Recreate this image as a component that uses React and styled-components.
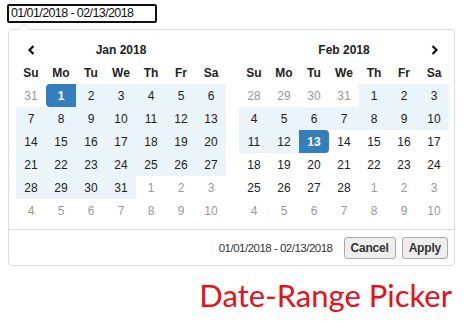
import React from "react";
import styled, { createGlobalStyle } from "styled-components";

const Global = createGlobalStyle`
  html, body { margin: 0; padding: 0; background: #fff; }
  body { font-family: "Liberation Sans", Arial, sans-serif; }
`;

const Page = styled.div`
  width: 474px;
  height: 334px;
  padding: 4px 0 0 7px;
  box-sizing: border-box;
  display: flex;
  flex-direction: column;
`;

const Input = styled.div`
  width: 150px;
  height: 19px;
  box-sizing: border-box;
  border: 2px solid #111;
  border-radius: 2px;
  font-size: 12.5px;
  letter-spacing: -0.6px;
  line-height: 15px;
  padding-left: 2px;
  color: #111;
`;

const Popup = styled.div`
  position: relative;
  margin-top: 6px;
  margin-left: 1px;
  width: 447px;
  box-sizing: border-box;
  border: 1px solid #ddd;
  border-radius: 4px;
  background: #fff;
  &::before {
    content: "";
    position: absolute;
    top: -6px;
    left: 9px;
    border-left: 6px solid transparent;
    border-right: 6px solid transparent;
    border-bottom: 6px solid #ddd;
  }
  &::after {
    content: "";
    position: absolute;
    top: -5px;
    left: 10px;
    border-left: 5px solid transparent;
    border-right: 5px solid transparent;
    border-bottom: 5px solid #fff;
  }
`;

const Calendars = styled.div`
  display: flex;
  justify-content: space-between;
  padding: 8px 5px 7px 7px;
`;

const Grid = styled.div`
  display: grid;
  grid-template-columns: repeat(7, 30px);
  grid-auto-rows: 23px;
  font-size: 12px;
  color: #333;
`;

const Cell = styled.div`
  display: flex;
  align-items: center;
  justify-content: center;
  color: ${(p) => (p.$sel ? "#fff" : p.$off ? "#999" : "#222")};
  background: ${(p) => (p.$sel ? "#357ebd" : p.$range ? "#ebf4f8" : "transparent")};
  border-radius: ${(p) =>
    p.$sel === "start" ? "4px 0 0 4px" : p.$sel === "end" ? "0 4px 4px 0" : "0"};
  font-weight: ${(p) => (p.$bold || p.$sel ? "bold" : "normal")};
`;

const MonthLabel = styled.div`
  grid-column: span 5;
  display: flex;
  align-items: center;
  justify-content: center;
  font-weight: bold;
  font-size: 12px;
  color: #222;
`;

const Footer = styled.div`
  border-top: 1px solid #ddd;
  height: 35px;
  display: flex;
  align-items: center;
  justify-content: flex-end;
  padding-right: 6px;
  gap: 6px;
  font-size: 11.5px;
  letter-spacing: -0.5px;
  color: #333;
`;

const RangeText = styled.span`
  margin-right: 5px;
`;

const Button = styled.button`
  height: 22px;
  padding: 0 6px;
  font-family: "Liberation Sans", Arial, sans-serif;
  font-size: 12px;
  letter-spacing: -0.2px;
  font-weight: bold;
  color: #333;
  background: #eee;
  border: 1px solid #aaa;
  border-radius: 3px;
`;

const Caption = styled.div`
  display: flex;
  justify-content: flex-end;
  padding-right: 22px;
  margin-top: 11px;
  font-family: Lato, "Open Sans", sans-serif;
  font-size: 31px;
  color: #e8101a;
  line-height: 36px;
`;

const Chevron = ({ dir }) => (
  <svg width="9" height="10" viewBox="0 0 9 10">
    <path
      d={dir === "left" ? "M6.5 1 L2.5 5 L6.5 9" : "M2.5 1 L6.5 5 L2.5 9"}
      fill="none"
      stroke="#111"
      strokeWidth="2.2"
    />
  </svg>
);

const DOW = ["Su", "Mo", "Tu", "We", "Th", "Fr", "Sa"];

const jan = [
  [31, 1, 2, 3, 4, 5, 6],
  [7, 8, 9, 10, 11, 12, 13],
  [14, 15, 16, 17, 18, 19, 20],
  [21, 22, 23, 24, 25, 26, 27],
  [28, 29, 30, 31, 1, 2, 3],
  [4, 5, 6, 7, 8, 9, 10],
];
const feb = [
  [28, 29, 30, 31, 1, 2, 3],
  [4, 5, 6, 7, 8, 9, 10],
  [11, 12, 13, 14, 15, 16, 17],
  [18, 19, 20, 21, 22, 23, 24],
  [25, 26, 27, 28, 1, 2, 3],
  [4, 5, 6, 7, 8, 9, 10],
];

function Calendar({ label, rows, left, cellInfo }) {
  return (
    <Grid>
      <Cell>{left ? <Chevron dir="left" /> : null}</Cell>
      <MonthLabel>{label}</MonthLabel>
      <Cell>{!left ? <Chevron dir="right" /> : null}</Cell>
      {DOW.map((d) => (
        <Cell key={d} $bold>
          {d}
        </Cell>
      ))}
      {rows.map((row, r) =>
        row.map((d, c) => {
          const info = cellInfo(r, c, d);
          return (
            <Cell key={`${r}-${c}`} $off={info.off} $range={info.range} $sel={info.sel}>
              {d}
            </Cell>
          );
        })
      )}
    </Grid>
  );
}

export default function App() {
  const janInfo = (r, c, d) => {
    const off = (r === 0 && d > 7) || (r >= 4 && d < 15);
    if (off) return { off: true };
    if (r === 0 && d === 1) return { sel: "start" };
    return { range: true };
  };
  const febInfo = (r, c, d) => {
    const off = (r === 0 && d > 7) || (r >= 4 && d < 15);
    if (off) return { off: true };
    if (d === 13 && r === 2) return { sel: "end" };
    if (r < 2 || (r === 2 && d < 13)) return { range: true };
    return {};
  };
  return (
    <>
      <Global />
      <Page>
        <Input>01/01/2018 - 02/13/2018</Input>
        <Popup>
          <Calendars>
            <Calendar label="Jan 2018" rows={jan} left cellInfo={janInfo} />
            <Calendar label="Feb 2018" rows={feb} cellInfo={febInfo} />
          </Calendars>
          <Footer>
            <RangeText>01/01/2018 - 02/13/2018</RangeText>
            <Button>Cancel</Button>
            <Button>Apply</Button>
          </Footer>
        </Popup>
        <Caption>Date-Range Picker</Caption>
      </Page>
    </>
  );
}
